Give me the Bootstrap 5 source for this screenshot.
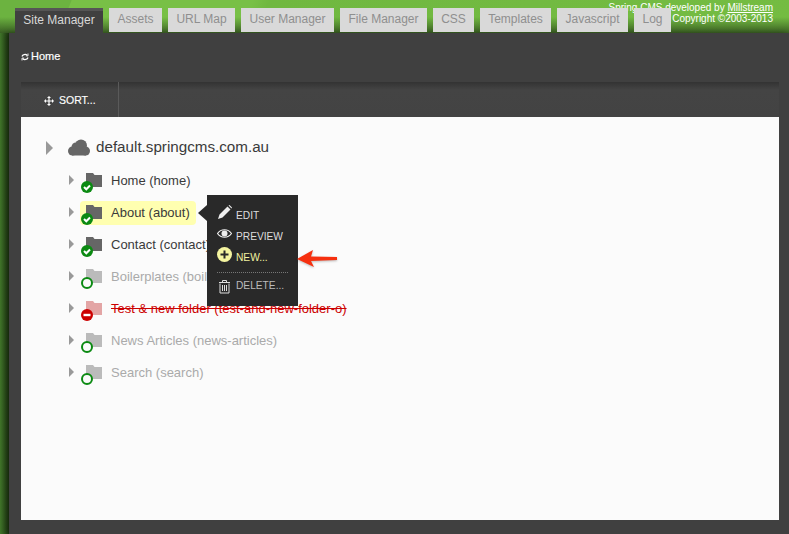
<!DOCTYPE html>
<html lang="en"><head><meta charset="utf-8"><title>Spring CMS</title>
<link href="https://cdn.jsdelivr.net/npm/bootstrap@5.3.0/dist/css/bootstrap.min.css" rel="stylesheet">
<style>
html,body{height:534px;overflow:hidden}
body{font-family:"Liberation Sans",Arial,sans-serif;font-size:12px;background:linear-gradient(90deg,#41762a 0,#1f3a12 9px,#6cb33f 9px);position:relative}
.topband{height:33px;background:linear-gradient(180deg,rgba(0,0,0,0) 0,rgba(0,0,0,0) 17px,rgba(30,50,20,.65) 33px),linear-gradient(112deg,#6cb340 0,#6cb340 66px,#78c046 67px,#78c046 235px,#70b840 250px,#74bc42);padding:8px 0 0 15px;gap:6px;align-items:flex-start}
.tabitem{height:24px;background:#d9d9d9;color:#8f8f8f;font-size:12px;line-height:23px;text-align:center;text-decoration:none;flex:none;position:relative;z-index:2}
.tabon{height:25px;background:#404040;border-top:3px solid #555;color:#d8d8d8;line-height:19px;width:88px}
.w53{width:53px}.w67{width:67px}.w93{width:93px}.w87{width:87px}.w41{width:41px}.w71{width:71px}.w37{width:37px}
.credits{position:absolute;top:2px;right:16px;text-align:right;color:#fff;font-size:10px;line-height:11px;z-index:1}
.credits a{color:#fff}
.panelbox{margin-left:9px;height:501px;background:#404040;box-shadow:-3px 0 6px rgba(0,0,0,.35);padding:0 10px 0 12px}
.crumb{height:49px;color:#fff;font-size:11px;-webkit-text-stroke:.2px #fff;padding-bottom:2px;gap:2px;align-items:center}
.toolrow{height:35px;background:linear-gradient(180deg,#333 0,#444 8px,#434343)}
.sortbtn{width:98px;border-right:1px solid #5a5a5a;color:#fff;font-size:10.5px;-webkit-text-stroke:.15px #fff;gap:5px;align-items:center;padding:2px 0 0 23px}
.whitebox{height:403px;background:#fbfbfb;position:relative;padding:16px 0 0 24px}
.rootrow{height:29px;font-size:15.2px;color:#3a3a3a;align-items:center}
.cloudpic{margin:0 6px 0 15px;flex:none}
.treewrap{padding:3px 0 0 24px}
.treerow{height:32px;align-items:center;font-size:13px;color:#3a3a3a;position:relative}
.dim{color:#aaa}
.struck{color:#cc0000;text-decoration:line-through}
.caretmark{width:0;height:0;border-left:5px solid #999;border-top:5px solid transparent;border-bottom:5px solid transparent;margin:-2px 3px 0 0;flex:none}
.rootcaret{border-left-width:7px;border-top-width:7px;border-bottom-width:7px;margin:0 0 0 1px}
.pillbox{height:24px;background:#ffffb0;border-radius:4px;display:flex;align-items:center;margin-left:3px;padding-right:6px}
.pillbox .nodepic{margin-left:-3px}
.nodepic{width:26px;height:26px;margin:-2px 8px 0 0;flex:none;display:block}
.rowlabel{white-space:nowrap}
.popmenu{position:absolute;left:186px;top:78px;width:91px;height:111px;background:#292929;color:#ddd;font-size:10.2px;padding:10px 0 0 10px}
.popmenu::before{content:"";position:absolute;left:-9px;top:10px;border-right:9px solid #292929;border-top:8px solid transparent;border-bottom:8px solid transparent}
.menurow{height:21px;gap:4px;align-items:center;white-space:nowrap}
.menuicon{width:15px;height:15px;flex:none;margin-top:-6px}
.iconlow{margin-top:2px}
.menunew{color:#f2f2a0}
.menudel{color:#bbb}
.menusep{border-top:1px dotted #777;margin:4px 10px 0 0;height:3px}
.redarrow{position:absolute;left:275px;top:132px;width:42px;height:20px;filter:drop-shadow(0 1px 1px rgba(0,0,0,.25))}
</style></head>
<body>
<div class="topband d-flex">
<a class="tabitem tabon" href="#">Site Manager</a>
<a class="tabitem w53" href="#">Assets</a>
<a class="tabitem w67" href="#">URL Map</a>
<a class="tabitem w93" href="#">User Manager</a>
<a class="tabitem w87" href="#">File Manager</a>
<a class="tabitem w41" href="#">CSS</a>
<a class="tabitem w71" href="#">Templates</a>
<a class="tabitem w71" href="#">Javascript</a>
<a class="tabitem w37" href="#">Log</a>
</div>
<div class="credits"><span class="d-block">Spring CMS developed by <a href="#">Millstream</a></span><span class="d-block">Copyright ©2003-2013</span></div>
<div class="panelbox">
<div class="crumb d-flex">
<svg width="8" height="8" viewBox="0 0 8 8" fill="none" stroke="#fff" stroke-width="1.2"><path d="M1 3.500C1.500 1.500 4.500 .8 6.300 2.200M7 4.500C6.500 6.500 3.500 7.200 1.700 5.800"/><path d="M7 .5v2.400H4.800M1 7.500V5.100h2.200" stroke-width=".9"/></svg>
<span>Home</span></div>
<div class="toolrow d-flex"><div class="sortbtn d-flex">
<svg width="10" height="10" viewBox="0 0 10 10" fill="#fff"><path d="M5 0l2 2H5.600v2.400H8V3l2 2-2 2V5.600H5.600V8H7l-2 2-2-2h1.400V5.600H2V7L0 5l2-2v1.400h2.400V2H3z"/></svg>
<span>SORT...</span></div></div>
<div class="whitebox">
<div class="rootrow d-flex"><i class="caretmark rootcaret"></i>
<svg class="cloudpic" width="22" height="17" viewBox="0 0 22 17" fill="#666"><circle cx="4.500" cy="12" r="4.500"/><circle cx="8" cy="8" r="4.500"/><circle cx="13" cy="6.500" r="6"/><circle cx="17.500" cy="12" r="4.500"/><rect x="4" y="10" width="14" height="6.500"/></svg>
<span>default.springcms.com.au</span></div>
<div class="treewrap">
<div class="treerow d-flex"><i class="caretmark"></i><svg class="nodepic" viewBox="0 0 26 26"><path d="M9 20V6h7l1.500 2H25v12z" fill="#666"/><circle cx="10" cy="20" r="6" fill="#0b8a12"/><path d="M7 20l2.300 2.300L13 18.500" fill="none" stroke="#fff" stroke-width="2"/></svg><span class="rowlabel">Home (home)</span></div>
<div class="treerow d-flex"><i class="caretmark"></i><span class="pillbox"><svg class="nodepic" viewBox="0 0 26 26"><path d="M9 20V6h7l1.500 2H25v12z" fill="#666"/><circle cx="10" cy="20" r="6" fill="#0b8a12"/><path d="M7 20l2.300 2.300L13 18.500" fill="none" stroke="#fff" stroke-width="2"/></svg><span class="rowlabel">About (about)</span></span></div>
<div class="treerow d-flex"><i class="caretmark"></i><svg class="nodepic" viewBox="0 0 26 26"><path d="M9 20V6h7l1.500 2H25v12z" fill="#666"/><circle cx="10" cy="20" r="6" fill="#0b8a12"/><path d="M7 20l2.300 2.300L13 18.500" fill="none" stroke="#fff" stroke-width="2"/></svg><span class="rowlabel">Contact (contact)</span></div>
<div class="treerow d-flex dim"><i class="caretmark"></i><svg class="nodepic" viewBox="0 0 26 26"><path d="M9 20V6h7l1.500 2H25v12z" fill="#bbb"/><circle cx="10" cy="20" r="5" fill="#fbfbfb" stroke="#0b8a12" stroke-width="2"/></svg><span class="rowlabel">Boilerplates (boilerplates)</span></div>
<div class="treerow d-flex"><i class="caretmark"></i><svg class="nodepic" viewBox="0 0 26 26"><path d="M9 20V6h7l1.500 2H25v12z" fill="#e3a5a5"/><circle cx="10" cy="20" r="6" fill="#cc0000"/><path d="M6.500 20h7" stroke="#fff" stroke-width="2.400"/></svg><span class="rowlabel struck">Test &amp; new folder (test-and-new-folder-o)</span></div>
<div class="treerow d-flex dim"><i class="caretmark"></i><svg class="nodepic" viewBox="0 0 26 26"><path d="M9 20V6h7l1.500 2H25v12z" fill="#bbb"/><circle cx="10" cy="20" r="5" fill="#fbfbfb" stroke="#0b8a12" stroke-width="2"/></svg><span class="rowlabel">News Articles (news-articles)</span></div>
<div class="treerow d-flex dim"><i class="caretmark"></i><svg class="nodepic" viewBox="0 0 26 26"><path d="M9 20V6h7l1.500 2H25v12z" fill="#bbb"/><circle cx="10" cy="20" r="5" fill="#fbfbfb" stroke="#0b8a12" stroke-width="2"/></svg><span class="rowlabel">Search (search)</span></div>
</div>
<div class="popmenu">
<div class="menurow d-flex"><svg class="menuicon" viewBox="0 0 15 15" fill="#eee"><path d="M10.500 1.500l3 3-8 8L1 14l1.500-4.500zM11.500.5l1-.5 2.500 2.500-.5 1z"/></svg><span>EDIT</span></div>
<div class="menurow d-flex"><svg class="menuicon" viewBox="0 0 15 15"><path d="M.5 7.500c3.500-5 10.500-5 14 0-3.500 5-10.500 5-14 0z" fill="none" stroke="#eee" stroke-width="1.200"/><circle cx="7.500" cy="7.500" r="3" fill="#eee"/></svg><span>PREVIEW</span></div>
<div class="menurow d-flex menunew"><svg class="menuicon" viewBox="0 0 15 15"><circle cx="7.500" cy="7.500" r="7.500" fill="#f4f4a0"/><path d="M7.500 3.500v8M3.500 7.500h8" stroke="#292929" stroke-width="2"/></svg><span>NEW...</span></div>
<div class="menusep"></div>
<div class="menurow d-flex menudel"><svg class="menuicon iconlow" viewBox="0 0 15 15" fill="none" stroke="#ddd"><path d="M3 4.500v9.500h9V4.500M2 3.500h11M5.500 3.500V1.500h4v2M5.500 6v6M7.500 6v6M9.500 6v6"/></svg><span>DELETE...</span></div>
</div>
<svg class="redarrow" viewBox="0 0 42 20"><path d="M1 10L17 1l-2 6.500 26 .5v3l-26 1 3 6z" fill="#f6300f"/></svg>
</div>
</div>
</body></html>
